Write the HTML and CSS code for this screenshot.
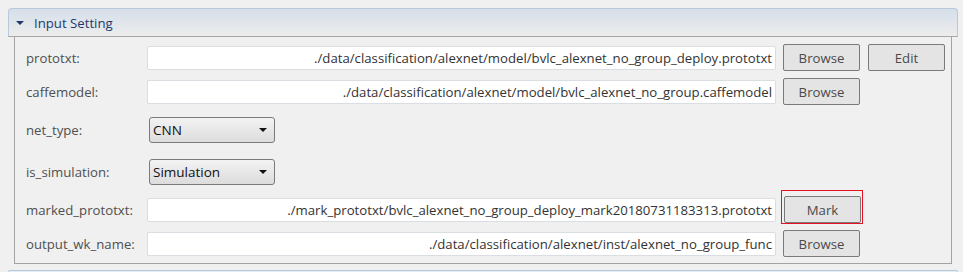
FILE: index.html
```html
<!DOCTYPE html>
<html>
<head>
<meta charset="utf-8">
<link rel="stylesheet" href="styles.css">
</head>
<body>
<div class="section">
  <div class="header">
    <span class="caret"></span>
    <span class="title">Input Setting</span>
  </div>
  <div class="panel">
    <div class="row r1">
      <div class="label">prototxt:</div>
      <div class="field">./data/classification/alexnet/model/bvlc_alexnet_no_group_deploy.prototxt</div>
      <div class="btn">Browse</div>
      <div class="btn">Edit</div>
    </div>
    <div class="row r2">
      <div class="label">caffemodel:</div>
      <div class="field">./data/classification/alexnet/model/bvlc_alexnet_no_group.caffemodel</div>
      <div class="btn">Browse</div>
    </div>
    <div class="row r3">
      <div class="label">net_type:</div>
      <div class="select"><span>CNN</span><span class="arrow"></span></div>
    </div>
    <div class="row r4">
      <div class="label">is_simulation:</div>
      <div class="select"><span>Simulation</span><span class="arrow"></span></div>
    </div>
    <div class="row r5">
      <div class="label">marked_prototxt:</div>
      <div class="field">./mark_prototxt/bvlc_alexnet_no_group_deploy_mark20180731183313.prototxt</div>
      <div class="btn marked">Mark</div>
    </div>
    <div class="row r6">
      <div class="label">output_wk_name:</div>
      <div class="field">./data/classification/alexnet/inst/alexnet_no_group_func</div>
      <div class="btn">Browse</div>
    </div>
  </div>
</div>
<div class="section next">
  <div class="header stub"></div>
</div>
</body>
</html>
```
FILE: styles.css
```css
html, body {
  margin: 0;
  padding: 0;
  background: #f0f0f0;
  font-family: "Open Sans", "Noto Sans", sans-serif;
  font-size: 12px;
  overflow: hidden;
}
.section {
  margin: 8px 0 0 8px;
  width: 950px;
}
.section.next {
  margin-top: 6px;
}
.header {
  box-sizing: border-box;
  height: 29px;
  border: 1px solid #b6c9dd;
  border-bottom: 1px solid #a7a7a7;
  border-radius: 4px 4px 0 0;
  background: linear-gradient(#d6dfea, #ececec);
  display: flex;
  align-items: center;
  padding-left: 7px;
}
.header.stub {
  height: 2px;
  border-bottom: none;
  background: #e6ecf3;
}
.caret {
  width: 0;
  height: 0;
  border-left: 4px solid transparent;
  border-right: 4px solid transparent;
  border-top: 4px solid #1d3a6a;
  margin-right: 10px;
  margin-top: 1px;
}
.title {
  color: #1e3a6c;
  font-size: 13.2px;
}
.panel {
  box-sizing: border-box;
  margin: 0 6px 0 6px;
  width: 938px;
  height: 227px;
  border: 1px solid #a3a3a3;
  border-top: none;
  padding: 7px 0 0 11px;
  display: flex;
  flex-direction: column;
}
.row {
  height: 27px;
  display: flex;
  align-items: center;
}
.r2 { margin-top: 7px; }
.r3 { margin-top: 11px; }
.r4 { margin-top: 15px; }
.r5 { margin-top: 11px; }
.r6 { margin-top: 7px; }
.label {
  width: 121px;
  color: #4f4f4f;
  font-size: 13.2px;
}
.field {
  box-sizing: border-box;
  width: 629px;
  height: 24px;
  background: #fff;
  border: 1px solid #dadde2;
  border-radius: 2px;
  color: #333;
  font-size: 13.2px;
  text-align: right;
  padding-right: 3px;
  line-height: 22px;
  white-space: nowrap;
  overflow: hidden;
}
.btn {
  box-sizing: border-box;
  width: 77px;
  height: 27px;
  margin-left: 7px;
  border: 1px solid #7a7a7a;
  border-radius: 2px;
  background: #e4e4e4;
  color: #4a4a4a;
  font-size: 13.2px;
  display: flex;
  align-items: center;
  justify-content: center;
}
.btn + .btn {
  margin-left: 8px;
}
.btn.marked {
  position: relative;
  margin-left: 8px;
}
.btn.marked::after {
  content: "";
  position: absolute;
  top: -7px;
  left: -4px;
  right: -3px;
  bottom: -2px;
  border: 1px solid #e81123;
}
.select {
  box-sizing: border-box;
  width: 126px;
  height: 26px;
  margin-left: 2px;
  border: 1px solid #7a7a7a;
  border-radius: 3px;
  background: linear-gradient(#f3f3f3, #dcdcdc);
  color: #111;
  font-size: 13.5px;
  display: flex;
  align-items: center;
  justify-content: space-between;
  padding: 0 7px 0 3px;
}
.arrow {
  width: 0;
  height: 0;
  border-left: 4px solid transparent;
  border-right: 4px solid transparent;
  border-top: 4px solid #111;
}
```
